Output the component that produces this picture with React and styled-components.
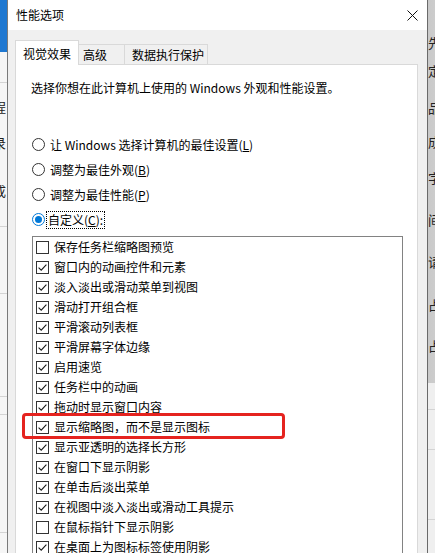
import React from 'react';
import styled, { createGlobalStyle } from 'styled-components';

const Global = createGlobalStyle`
  html, body { margin: 0; padding: 0; overflow: hidden; background: #ececec; }
  body {
    font-family: "Noto Sans CJK SC", "Noto Sans", sans-serif;
    font-size: 12px;
    color: #000;
  }
`;

const Desktop = styled.div`
  position: relative;
  width: 435px;
  height: 553px;
  overflow: hidden;
  background: #ececec;
`;

/* ---------- background windows ---------- */
const LeftWindow = styled.div`
  position: absolute;
  left: -67px;
  top: 0;
  width: 75px;
  height: 553px;
  background: #f6f6f6;
  display: flex;
  flex-direction: column;
  z-index: 0;
`;
const LeftHeader = styled.div`
  flex: none;
  width: 100%;
  height: 52px;
  background: #1f78d1;
`;
const SideRow = styled.div`
  flex: none;
  box-sizing: border-box;
  height: ${p => p.$h}px;
  border-bottom: ${p => (p.$line ? '1px solid #d4d4d4' : 'none')};
  display: flex;
  align-items: center;
  justify-content: ${p => (p.$end ? 'flex-end' : 'flex-start')};
  padding: ${p => (p.$end ? '0 2px 0 0' : '0')};
  font-size: 13px;
  line-height: 16px;
  color: #222;
`;
const RightWindow = styled.div`
  position: absolute;
  left: 428px;
  top: 0;
  width: 40px;
  height: 553px;
  display: flex;
  flex-direction: column;
`;
const RightTop = styled.div`
  flex: none;
  height: 383px;
  background: linear-gradient(90deg, #c9c9c9, #dcdcdc);
  display: flex;
  flex-direction: column;
  padding-top: 34px;
  box-sizing: border-box;
`;
const RightBottom = styled.div`
  flex: 1;
  background: #efefef;
  display: flex;
  flex-direction: column;
`;

/* ---------- dialog ---------- */
const Dialog = styled.div`
  position: absolute;
  left: 7px;
  top: 0;
  width: 421px;
  height: 580px;
  box-sizing: border-box;
  border-left: 1px solid #7a7a7a;
  border-right: 1px solid #6a6a6a;
  background: #f0f0f0;
  display: flex;
  flex-direction: column;
  z-index: 1;
`;
const TitleBar = styled.div`
  flex: none;
  height: 30px;
  background: #fff;
  display: flex;
  align-items: center;
  justify-content: space-between;
  padding-left: 8px;
`;
const Title = styled.span`
  font-size: 12px;
  line-height: 16px;
  color: #000;
`;
const CloseButton = styled.div`
  width: 30px;
  height: 30px;
  display: flex;
  align-items: center;
  justify-content: center;
`;
const Body = styled.div`
  flex: 1;
  display: flex;
  flex-direction: column;
  padding: 10px 9px 0 7px;
`;
const TabRow = styled.div`
  flex: none;
  display: flex;
  align-items: flex-end;
  height: 25px;
  margin-bottom: -1px;
  position: relative;
  z-index: 1;
`;
const Tab = styled.div`
  box-sizing: border-box;
  width: ${p => p.$w}px;
  height: ${p => (p.$active ? 25 : 21)}px;
  margin-left: ${p => (p.$first ? 0 : -1)}px;
  padding-left: ${p => p.$pl}px;
  padding-top: ${p => (p.$active ? 4 : 1)}px;
  border: 1px solid #d9d9d9;
  border-bottom: ${p => (p.$active ? 'none' : '1px solid #d9d9d9')};
  background: ${p => (p.$active ? '#fff' : '#f0f0f0')};
  position: relative;
  z-index: ${p => (p.$active ? 2 : 1)};
  font-size: 12px;
  line-height: 18px;
  white-space: nowrap;
`;
const Panel = styled.div`
  flex: 1;
  background: #fff;
  border: 1px solid #d9d9d9;
  padding: 14px 13px 0 15px;
  display: flex;
  flex-direction: column;
`;
const Description = styled.div`
  line-height: 18px;
  white-space: nowrap;
`;
const RadioGroup = styled.div`
  margin-top: 35px;
  display: flex;
  flex-direction: column;
`;
const RadioRow = styled.div`
  height: 25px;
  display: flex;
  align-items: center;
  padding-left: 1px;
  white-space: nowrap;
`;
const RadioCircle = styled.span`
  box-sizing: border-box;
  flex: none;
  width: 13px;
  height: 13px;
  border-radius: 50%;
  border: 1px solid ${p => (p.$on ? '#0078d7' : '#333')};
  background: #fff;
  display: flex;
  align-items: center;
  justify-content: center;
  &::after {
    content: '';
    display: ${p => (p.$on ? 'block' : 'none')};
    width: 7px;
    height: 7px;
    border-radius: 50%;
    background: #0078d7;
  }
`;
const RadioLabel = styled.span`
  margin-left: ${p => (p.$focus ? 1 : 3)}px;
  padding: 0 1px;
  line-height: 16px;
  border: ${p => (p.$focus ? '1px dotted #000' : '1px solid transparent')};
`;
const ListBox = styled.div`
  margin-top: 4px;
  margin-left: 1px;
  width: 371px;
  height: 340px;
  box-sizing: border-box;
  border: 1px solid #828282;
  background: #fff;
  display: flex;
  flex-direction: column;
`;
const ListRow = styled.div`
  flex: none;
  height: 20px;
  display: flex;
  align-items: center;
  padding-left: 3px;
  gap: 5px;
  white-space: nowrap;
  line-height: 16px;
`;
const CheckBox = styled.span`
  box-sizing: border-box;
  flex: none;
  width: 13px;
  height: 13px;
  border: 1px solid #333;
  background: #fff;
  display: flex;
  align-items: center;
  justify-content: center;
`;
const Highlight = styled.div`
  position: absolute;
  left: 22px;
  top: 413px;
  width: 263px;
  height: 26px;
  box-sizing: border-box;
  border: 3px solid #e5231f;
  border-radius: 4px;
  z-index: 3;
  pointer-events: none;
`;

const items = [
  ['保存任务栏缩略图预览', false],
  ['窗口内的动画控件和元素', true],
  ['淡入淡出或滑动菜单到视图', true],
  ['滑动打开组合框', true],
  ['平滑滚动列表框', true],
  ['平滑屏幕字体边缘', true],
  ['启用速览', true],
  ['任务栏中的动画', true],
  ['拖动时显示窗口内容', true],
  ['显示缩略图，而不是显示图标', true],
  ['显示亚透明的选择长方形', true],
  ['在窗口下显示阴影', true],
  ['在单击后淡出菜单', true],
  ['在视图中淡入淡出或滑动工具提示', true],
  ['在鼠标指针下显示阴影', false],
  ['在桌面上为图标标签使用阴影', true],
];

const rightRows = [
  ['先', 18], ['定', 37], ['品', 37], ['成', 32], ['字', 39], ['间', 45], ['请', 40], ['占', 45], ['占', 38],
];

const Check = () => (
  <svg width="11" height="11" viewBox="0 0 11 11">
    <path d="M1.6 5.6 L4.2 8.2 L9.4 2.6" fill="none" stroke="#1a1a1a" strokeWidth="1.1" />
  </svg>
);

export default function App() {
  return (
    <Desktop>
      <Global />
      <LeftWindow>
        <LeftHeader />
        <SideRow $h={31} $line />
        <SideRow $h={48} $end>程</SideRow>
        <SideRow $h={24} $end>录</SideRow>
        <SideRow $h={72} $line $end>成</SideRow>
        <SideRow $h={67} $line />
        <SideRow $h={103} $line />
        <SideRow $h={18} $line />
        <SideRow $h={118} $line />
      </LeftWindow>

      <RightWindow>
        <RightTop>
          {rightRows.map(([t, h], i) => (
            <SideRow key={i} $h={h}>{t}</SideRow>
          ))}
        </RightTop>
        <RightBottom>
          <SideRow $h={27} $line />
          <SideRow $h={40} $line />
          <SideRow $h={70} $line />
        </RightBottom>
      </RightWindow>

      <Dialog>
        <TitleBar>
          <Title>性能选项</Title>
          <CloseButton>
            <svg width="11" height="11" viewBox="0 0 11 11">
              <path d="M0.5 0.5 L10.5 10.5 M10.5 0.5 L0.5 10.5" stroke="#111" strokeWidth="1" fill="none" />
            </svg>
          </CloseButton>
        </TitleBar>
        <Body>
          <TabRow>
            <Tab $active $first $w={64} $pl={7}>视觉效果</Tab>
            <Tab $w={47} $pl={4}>高级</Tab>
            <Tab $w={84} $pl={7}>数据执行保护</Tab>
          </TabRow>
          <Panel>
            <Description>选择你想在此计算机上使用的 Windows 外观和性能设置。</Description>
            <RadioGroup>
              <RadioRow>
                <RadioCircle />
                <RadioLabel>让 Windows 选择计算机的最佳设置(<u>L</u>)</RadioLabel>
              </RadioRow>
              <RadioRow>
                <RadioCircle />
                <RadioLabel>调整为最佳外观(<u>B</u>)</RadioLabel>
              </RadioRow>
              <RadioRow>
                <RadioCircle />
                <RadioLabel>调整为最佳性能(<u>P</u>)</RadioLabel>
              </RadioRow>
              <RadioRow>
                <RadioCircle $on />
                <RadioLabel $focus>自定义(<u>C</u>):</RadioLabel>
              </RadioRow>
            </RadioGroup>
            <ListBox>
              {items.map(([label, on]) => (
                <ListRow key={label}>
                  <CheckBox>{on && <Check />}</CheckBox>
                  <span>{label}</span>
                </ListRow>
              ))}
            </ListBox>
          </Panel>
        </Body>
      </Dialog>
      <Highlight />
    </Desktop>
  );
}
